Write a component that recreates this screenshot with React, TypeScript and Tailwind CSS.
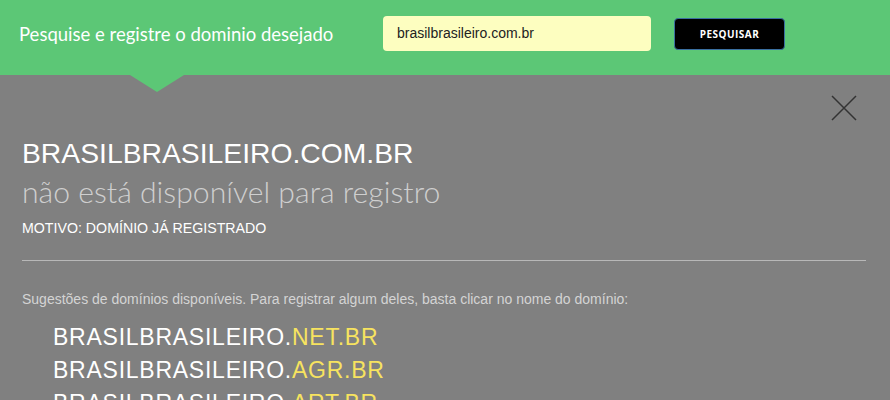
const suggestions = ["NET.BR", "AGR.BR", "ART.BR"]

export default function App() {
    return (
        <div className="w-[890px] h-[400px] overflow-hidden bg-[#808080] font-['Liberation_Sans',Arial,sans-serif]">
            {/* search bar */}
            <div className="relative h-[75px] bg-[#5cc776] flex items-start pl-[19px] pt-[16px]">
                <h2 className="w-[364px] pt-[5px] font-['Lato',sans-serif] text-[18.5px] text-white">
                    Pesquise e registre o dominio desejado
                </h2>
                <div className="w-[268px] h-[35px] rounded-[4px] bg-[#fdfec0] flex items-center pl-[14px] text-[14px] text-[#222]">
                    brasilbrasileiro.com.br
                </div>
                <button className="ml-[23px] mt-[2px] w-[111px] h-[32px] rounded-[4px] bg-black border border-[#3a6fa0] text-white text-[10px] font-bold tracking-[0.5px] font-['Open_Sans',sans-serif]">
                    PESQUISAR
                </button>
                <div className="absolute left-[130px] top-[75px] w-0 h-0 border-l-[27px] border-r-[27px] border-t-[17px] border-l-transparent border-r-transparent border-t-[#5cc776]" />
            </div>

            {/* result */}
            <div className="relative px-[22px] pt-[62px]">
                <svg className="absolute left-[831px] top-[20px]" width="26" height="26" viewBox="0 0 26 26">
                    <path d="M1 1 L25 25 M25 1 L1 25" stroke="#333" strokeWidth="1.5" fill="none" />
                </svg>
                <h1 className="text-[28.3px] leading-[32px] text-white">BRASILBRASILEIRO.COM.BR</h1>
                <p className="mt-[4px] font-['Lato',sans-serif] font-light text-[30.2px] leading-[36px] text-[#cfcfcf]">
                    não está disponível para registro
                </p>
                <p className="mt-[10px] text-[14.2px] leading-[18px] text-white">MOTIVO: DOMÍNIO JÁ REGISTRADO</p>
                <div className="mt-[23px] w-[844px] h-px bg-[#b8b8b8]" />
                <p className="mt-[29px] text-[14px] leading-[18px] text-[#d4d4d4]">
                    Sugestões de domínios disponíveis. Para registrar algum deles, basta clicar no nome do domínio:
                </p>
                <ul className="mt-[13px] pl-[31px]">
                    {suggestions.map((s) => (
                        <li key={s} className="text-[23px] tracking-[0.75px] leading-[33px] text-white">
                            BRASILBRASILEIRO.<span className="text-[#f7e35f]">{s}</span>
                        </li>
                    ))}
                </ul>
            </div>
        </div>
    )
}
